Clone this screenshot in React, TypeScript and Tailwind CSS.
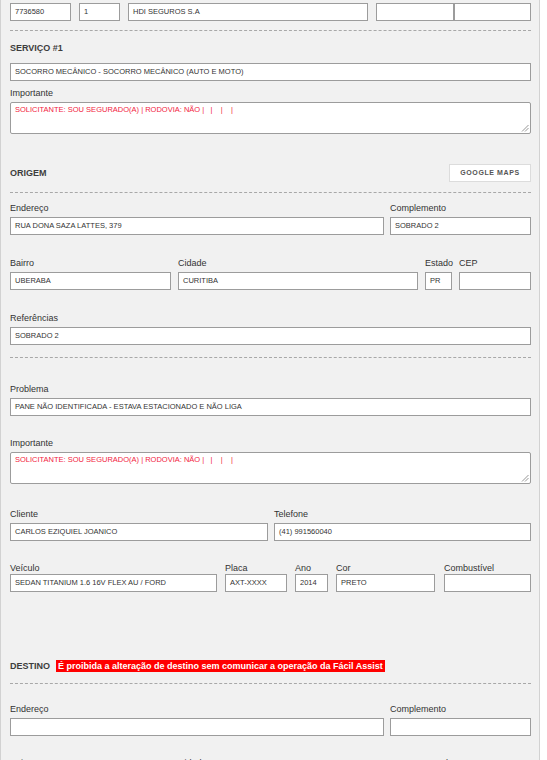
import React from "react";

const FONT = { fontFamily: '"Liberation Sans", Arial, sans-serif' };

function Label({ children, tight }: { children?: React.ReactNode; tight?: boolean }) {
  return (
    <div
      className={
        tight
          ? "h-[11px] text-[9px] leading-[11px] text-[#333] whitespace-nowrap"
          : "h-[12px] text-[9px] leading-[12px] text-[#333] whitespace-nowrap"
      }
    >
      {children}
    </div>
  );
}

function Box({ value, className = "" }: { value?: string; className?: string }) {
  return (
    <div
      className={
        "h-[18px] bg-white border border-[#9c9c9c] pl-[4px] text-[7.5px] leading-[16px] text-[#333] whitespace-nowrap overflow-hidden " +
        className
      }
    >
      {value}
    </div>
  );
}

function Field({
  label,
  value,
  className = "",
  tight,
}: {
  label: string;
  value?: string;
  className?: string;
  tight?: boolean;
}) {
  return (
    <div className={"shrink-0 " + className}>
      <Label tight={tight}>{label}</Label>
      <Box value={value} className={tight ? "" : "mt-[3px]"} />
    </div>
  );
}

function Divider({ className = "" }: { className?: string }) {
  return <div className={"border-t border-dashed border-[#a8a8a8] " + className} />;
}

function Heading({ children }: { children: React.ReactNode }) {
  return <div className="text-[9px] leading-[12px] font-bold text-[#3d3d3d] whitespace-nowrap">{children}</div>;
}

function Important({ className = "" }: { className?: string }) {
  return (
    <div className={className}>
      <Label>Importante</Label>
      <div className="relative mt-[3px] h-[32px] bg-white border border-[#9c9c9c] rounded-[2px] pl-[4px] pt-[2px] text-[7.5px] leading-[10px] text-[#f2213d] whitespace-pre">
        {"SOLICITANTE: SOU SEGURADO(A) | RODOVIA: NÃO |   |    |    |"}
        <svg className="absolute right-[1px] bottom-[1px]" width="8" height="8" viewBox="0 0 8 8">
          <line x1="7.5" y1="1" x2="1" y2="7.5" stroke="#8a8a8a" strokeWidth="0.9" />
          <line x1="7.5" y1="4" x2="4" y2="7.5" stroke="#8a8a8a" strokeWidth="0.9" />
        </svg>
      </div>
    </div>
  );
}

export default function App() {
  return (
    <div className="min-h-screen bg-white" style={FONT}>
      <div className="w-[540px] min-h-[760px] bg-[#f1f1f1] border-l border-r border-[#d2d2d2] pl-[9px] pr-[8px] pt-[3px] pb-[40px]">
        {/* top row */}
        <div className="flex">
          <Box value="7736580" className="w-[61px] mr-[8px]" />
          <Box value="1" className="w-[41px] mr-[8px]" />
          <Box value="HDI SEGUROS S.A" className="w-[240px] mr-[8px]" />
          <Box className="w-[78px]" />
          <Box className="w-[77px]" />
        </div>

        <Divider className="mt-[9px]" />

        <div className="mt-[11px]">
          <Heading>SERVIÇO #1</Heading>
        </div>
        <Box value="SOCORRO MECÂNICO - SOCORRO MECÂNICO (AUTO E MOTO)" className="mt-[9px]" />
        <Important className="mt-[6px]" />

        {/* origem */}
        <div className="mt-[30px] h-[18px] flex items-center justify-between">
          <Heading>ORIGEM</Heading>
          <button className="w-[82px] h-[18px] bg-white border border-[#dcdcdc] text-[7px] font-bold tracking-[0.6px] text-[#555] leading-[16px]">
            GOOGLE MAPS
          </button>
        </div>

        <Divider className="mt-[10px]" />

        <div className="mt-[9px] flex gap-[6px]">
          <Field label="Endereço" value="RUA DONA SAZA LATTES, 379" className="w-[374px]" />
          <Field label="Complemento" value="SOBRADO 2" className="w-[141px]" />
        </div>

        <div className="mt-[22px] flex gap-[7px]">
          <Field label="Bairro" value="UBERABA" className="w-[161px]" />
          <Field label="Cidade" value="CURITIBA" className="w-[240px]" />
          <Field label="Estado" value="PR" className="w-[27px]" />
          <Field label="CEP" className="w-[72px]" />
        </div>

        <Field label="Referências" value="SOBRADO 2" className="mt-[22px]" />

        <Divider className="mt-[12px]" />

        <Field label="Problema" value="PANE NÃO IDENTIFICADA - ESTAVA ESTACIONADO E NÃO LIGA" className="mt-[25px]" />
        <Important className="mt-[21px]" />

        <div className="mt-[24px] flex gap-[6px]">
          <Field label="Cliente" value="CARLOS EZIQUIEL JOANICO" className="w-[258px]" />
          <Field label="Telefone" value="(41) 991560040" className="w-[257px]" />
        </div>

        <div className="mt-[22px] flex">
          <Field tight label="Veículo" value="SEDAN TITANIUM 1.6 16V FLEX AU / FORD" className="w-[207px] mr-[8px]" />
          <Field tight label="Placa" value="AXT-XXXX" className="w-[62px] mr-[8px]" />
          <Field tight label="Ano" value="2014" className="w-[33px] mr-[8px]" />
          <Field tight label="Cor" value="PRETO" className="w-[99px] mr-[9px]" />
          <Field tight label="Combustível" className="w-[87px]" />
        </div>

        {/* destino */}
        <div className="mt-[68px] h-[12px] flex items-center gap-[6px]">
          <Heading>DESTINO</Heading>
          <span className="bg-[#ff0000] px-[2px] text-[9px] leading-[12px] font-bold text-white whitespace-nowrap">
            É proibida a alteração de destino sem comunicar a operação da Fácil Assist
          </span>
        </div>

        <Divider className="mt-[11px]" />

        <div className="mt-[19px] flex gap-[6px]">
          <Field label="Endereço" className="w-[374px]" />
          <Field label="Complemento" className="w-[141px]" />
        </div>

        <div className="mt-[21px] flex gap-[7px]">
          <Field label="Bairro" className="w-[161px]" />
          <Field label="Cidade" className="w-[240px]" />
          <Field label="Estado" className="w-[27px]" />
          <Field label="CEP" className="w-[72px]" />
        </div>
      </div>
    </div>
  );
}
